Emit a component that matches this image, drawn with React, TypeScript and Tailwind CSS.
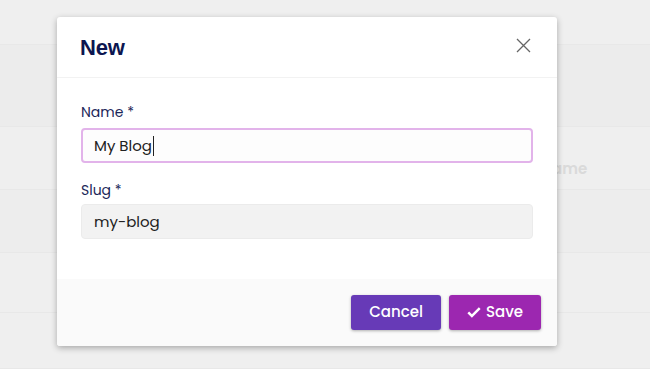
import { useState } from "react";

const rows = [
  { h: "h-[45px]", bg: "bg-[#efefef]", text: "" },
  { h: "h-[82px]", bg: "bg-[#ececec]", text: "" },
  { h: "h-[63px]", bg: "bg-[#efefef]", text: "Name" },
  { h: "h-[63px]", bg: "bg-[#ededed]", text: "" },
  { h: "h-[60px]", bg: "bg-[#efefef]", text: "" },
  { h: "h-[56px]", bg: "bg-[#efefef]", text: "" },
];

export default function App() {
  const [name, setName] = useState("My Blog");
  const slug = name.toLowerCase().trim().replace(/\s+/g, "-");

  return (
    <div className="relative w-[650px] h-[369px] overflow-hidden bg-[#eeeeee] font-['Poppins','Lato',sans-serif]">
      {/* page behind the overlay */}
      <div className="flex flex-col">
        {rows.map((r, i) => (
          <div
            key={i}
            className={`${r.h} ${r.bg} border-b border-[#e8e8e8] flex items-center pl-[541px]`}
          >
            {r.text && (
              <span className="text-[15px] font-semibold text-[#dadada] mt-[22px]">{r.text}</span>
            )}
          </div>
        ))}
      </div>

      {/* modal */}
      <div className="absolute left-[57px] top-[17px] w-[500px] bg-white rounded-[3px] shadow-[0_2px_6px_rgba(0,0,0,0.3)] overflow-hidden">
        <div className="h-[61px] px-[23px] flex items-center justify-between border-b border-[#f2f2f2]">
          <h2 className="text-[22px] font-bold text-[#0c1650] font-['Liberation_Sans',Arial,sans-serif] tracking-[-0.2px]">
            New
          </h2>
          <button className="w-5 h-5 flex items-center justify-center text-[#666] mr-[1px] mt-[-4px]">
            <svg width="15" height="15" viewBox="0 0 15 15" fill="none" stroke="currentColor" strokeWidth="1.3">
              <path d="M1 1L14 14M14 1L1 14" />
            </svg>
          </button>
        </div>

        <div className="px-6 pt-6 pb-10 flex flex-col">
          <label className="text-[14px] text-[#1c2759] leading-5 mb-[6px]">Name *</label>
          <div className="h-[35px] rounded-[4px] border-2 border-[#e2b3ea] bg-[#fdfdfd] flex items-center px-[11px]">
            <span className="text-[15px] text-[#222] leading-5">{name}</span>
            <span className="w-px h-[20px] bg-[#222] ml-[1px]" onClick={() => setName(name)} />
          </div>
          <label className="text-[14px] text-[#1c2759] leading-5 mt-[17px] mb-[4px]">Slug *</label>
          <div className="h-[35px] rounded-[4px] border border-[#ebebeb] bg-[#f2f2f2] flex items-center px-3">
            <span className="text-[15px] text-[#222] leading-5">{slug}</span>
          </div>
        </div>

        <div className="h-[67px] bg-[#fafafa] flex items-start justify-end gap-2 pt-4 pr-4">
          <button className="w-[90px] h-[35px] rounded-[3px] bg-[#673ab7] text-white text-[15px] font-medium shadow-[0_1px_3px_rgba(0,0,0,0.3)]">
            Cancel
          </button>
          <button className="w-[92px] h-[35px] rounded-[3px] bg-[#9c27b0] text-white text-[15px] font-medium shadow-[0_1px_3px_rgba(0,0,0,0.3)] flex items-center justify-center gap-[5px]">
            <svg width="14" height="11" viewBox="0 0 15 12" fill="currentColor">
              <path d="M5.2 11.6L0.3 6.7l1.9-1.9 3 3L12.8 0.2l1.9 1.9z" />
            </svg>
            Save
          </button>
        </div>
      </div>
    </div>
  );
}
